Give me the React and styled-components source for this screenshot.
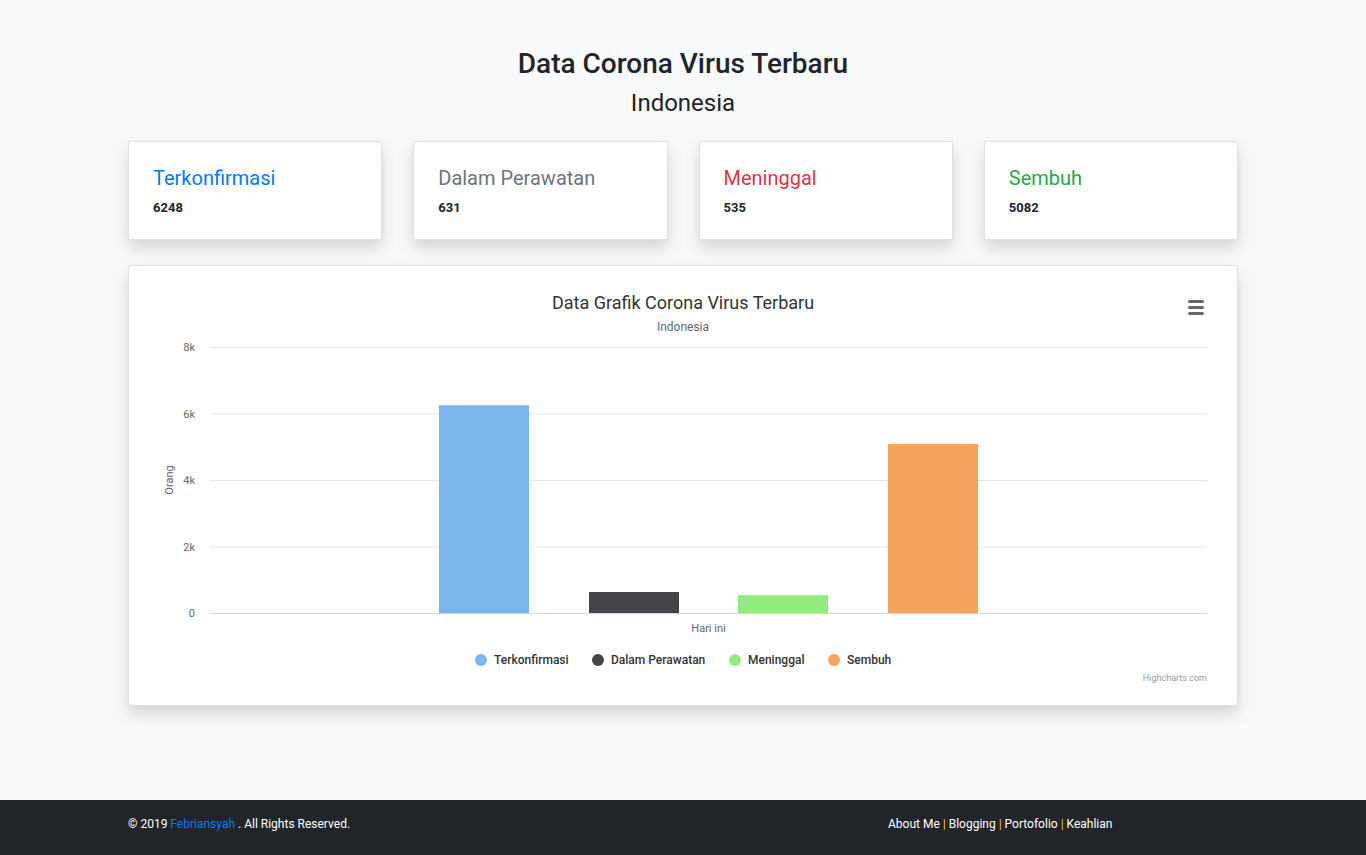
import React from "react";
import styled, { createGlobalStyle } from "styled-components";

const GlobalStyle = createGlobalStyle`
  html, body { margin: 0; padding: 0; }
  body {
    background: #f8f9fa;
    font-family: Roboto, "Liberation Sans", sans-serif;
    color: #212529;
  }
`;

const Page = styled.div`
  min-height: 100vh;
  display: flex;
  flex-direction: column;
`;

const Main = styled.main`
  flex: 1;
  width: 1110px;
  margin: 0 auto;
  padding-top: 47px;
`;

const Title = styled.h1`
  margin: 0 0 8px;
  text-align: center;
  font-size: 28px;
  font-weight: 500;
  line-height: 1.2;
`;

const Subtitle = styled.h2`
  margin: 0;
  text-align: center;
  font-size: 24px;
  font-weight: 400;
  line-height: 1.2;
`;

const CardRow = styled.div`
  display: grid;
  grid-template-columns: repeat(4, 1fr);
  gap: 31px;
  margin-top: 24px;
`;

const Card = styled.div`
  background: #fff;
  border: 1px solid rgba(0, 0, 0, 0.125);
  box-shadow: 0 8px 16px rgba(0, 0, 0, 0.15);
  border-radius: 2px;
`;

const StatCard = styled(Card)`
  padding: 24px;
  height: 99px;
  box-sizing: border-box;
`;

const StatTitle = styled.div`
  font-size: 20px;
  line-height: 24px;
  color: ${p => p.color};
  margin-bottom: 8px;
`;

const StatValue = styled.div`
  font-size: 13px;
  font-weight: 700;
  line-height: 20px;
`;

const ChartCard = styled(Card)`
  margin-top: 25px;
  height: 441px;
  box-sizing: border-box;
  border-radius: 4px;
`;

const Footer = styled.footer`
  background: #212529;
  height: 55px;
  box-sizing: border-box;
  padding-top: 16px;
  color: #fff;
  font-size: 12px;
  font-weight: 400;
  line-height: 16px;
`;

const FooterInner = styled.div`
  width: 1110px;
  margin: 0 auto;
  display: grid;
  grid-template-columns: 760px 1fr;
`;

const Link = styled.span`
  color: ${p => p.color || "#fff"};
`;

const stats = [
  { label: "Terkonfirmasi", value: 6248, color: "#007bff" },
  { label: "Dalam Perawatan", value: 631, color: "#6c757d" },
  { label: "Meninggal", value: 535, color: "#dc3545" },
  { label: "Sembuh", value: 5082, color: "#28a745" }
];

const series = [
  { name: "Terkonfirmasi", value: 6248, color: "#7cb5ec", x: 310 },
  { name: "Dalam Perawatan", value: 631, color: "#434348", x: 460 },
  { name: "Meninggal", value: 535, color: "#90ed7d", x: 609 },
  { name: "Sembuh", value: 5082, color: "#f7a35c", x: 759 }
];

const legend = [
  { cx: 352, tx: 365 },
  { cx: 469, tx: 482 },
  { cx: 606, tx: 619 },
  { cx: 705, tx: 718 }
];

const ticks = [8000, 6000, 4000, 2000, 0];
const yOf = v => 347 - (v / 8000) * 266;

const Chart = () => (
  <svg width="1108" height="439" viewBox="0 0 1108 439" fontFamily="Roboto, 'Liberation Sans', sans-serif">
    <text x="554" y="43" textAnchor="middle" fontSize="18" fill="#333">
      Data Grafik Corona Virus Terbaru
    </text>
    <text x="554" y="65" textAnchor="middle" fontSize="12" fill="#666">
      Indonesia
    </text>
    <g fill="#666">
      <rect x="1059" y="34" width="16" height="3" rx="1.5" />
      <rect x="1059" y="40" width="16" height="3" rx="1.5" />
      <rect x="1059" y="46" width="16" height="3" rx="1.5" />
    </g>
    {ticks.map(t => (
      <g key={t}>
        <line
          x1="81"
          x2="1078"
          y1={yOf(t) + 0.5}
          y2={yOf(t) + 0.5}
          stroke={t === 0 ? "#ccd6eb" : "#e6e6e6"}
        />
        <text x="66" y={yOf(t) + 4} textAnchor="end" fontSize="11" fill="#666">
          {t === 0 ? "0" : `${t / 1000}k`}
        </text>
      </g>
    ))}
    <text x="44" y="214" transform="rotate(-90 44 214)" textAnchor="middle" fontSize="11" fill="#666">
      Orang
    </text>
    {series.map(s => (
      <rect key={s.name} x={s.x} y={yOf(s.value)} width="90" height={347 - yOf(s.value)} fill={s.color} />
    ))}
    <text x="579.5" y="366" textAnchor="middle" fontSize="11" fill="#666">
      Hari ini
    </text>
    {series.map((s, i) => (
      <g key={s.name}>
        <circle cx={legend[i].cx} cy="394" r="6" fill={s.color} />
        <text x={legend[i].tx} y="398" fontSize="12" fontWeight="500" fill="#333">
          {s.name}
        </text>
      </g>
    ))}
    <text x="1078" y="415" textAnchor="end" fontSize="9" fill="#999">
      Highcharts.com
    </text>
  </svg>
);

export default function App() {
  return (
    <Page>
      <GlobalStyle />
      <Main>
        <Title>Data Corona Virus Terbaru</Title>
        <Subtitle>Indonesia</Subtitle>
        <CardRow>
          {stats.map(s => (
            <StatCard key={s.label}>
              <StatTitle color={s.color}>{s.label}</StatTitle>
              <StatValue>{s.value}</StatValue>
            </StatCard>
          ))}
        </CardRow>
        <ChartCard>
          <Chart />
        </ChartCard>
      </Main>
      <Footer>
        <FooterInner>
          <div>
            © 2019 <Link color="#007bff">Febriansyah</Link> . All Rights Reserved.
          </div>
          <div>
            <Link>About Me</Link> <Link color="#ffc107">|</Link> <Link>Blogging</Link>{" "}
            <Link color="#ffc107">|</Link> <Link>Portofolio</Link> <Link color="#ffc107">|</Link>{" "}
            <Link>Keahlian</Link>
          </div>
        </FooterInner>
      </Footer>
    </Page>
  );
}
